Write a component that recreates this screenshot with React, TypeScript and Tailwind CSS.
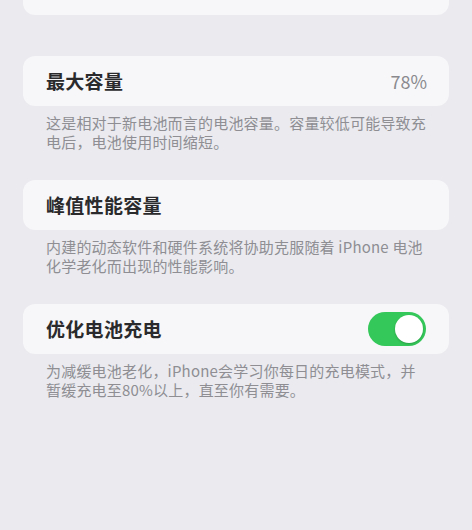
export default function App() {
  return (
    <div
      className="w-[472px] h-[530px] bg-[#eaeaef] overflow-hidden"
      style={{ fontFamily: '"Noto Sans CJK SC", "Noto Sans", sans-serif' }}
    >
      <div className="px-[23px]">
        {/* tail of the card above */}
        <div className="h-[15px] rounded-b-[12px] bg-[#f7f7f9]" />

        <div className="mt-[41px]">
          <Row title="最大容量" value="78%" />
          <Note>
            这是相对于新电池而言的电池容量。容量较低可能导致充
            <br />
            电后，电池使用时间缩短。
          </Note>
        </div>

        <div className="mt-[29px]">
          <Row title="峰值性能容量" />
          <Note>
            内建的动态软件和硬件系统将协助克服随着 iPhone 电池
            <br />
            化学老化而出现的性能影响。
          </Note>
        </div>

        <div className="mt-[29px]">
          <Row title="优化电池充电" toggle />
          <Note>
            为减缓电池老化，iPhone会学习你每日的充电模式，并
            <br />
            暂缓充电至80%以上，直至你有需要。
          </Note>
        </div>
      </div>
    </div>
  )
}

function Row({ title, value, toggle }: { title: string; value?: string; toggle?: boolean }) {
  return (
    <div className="h-[50px] rounded-[12px] bg-[#f7f7f9] flex items-center justify-between pl-[23px] pr-[22px]">
      <span className="text-[19px] font-semibold text-[#2a2a2c] tracking-[0.3px]">{title}</span>
      {value && <span className="text-[18px] text-[#8a8a8e]">{value}</span>}
      {toggle && <Switch />}
    </div>
  )
}

function Switch() {
  return (
    <div className="w-[58px] h-[34px] rounded-full bg-[#34c759] flex items-center justify-end p-[3px] mr-[1px]">
      <div className="w-[28px] h-[28px] rounded-full bg-white shadow-[0_1px_2px_rgba(0,0,0,0.2)]" />
    </div>
  )
}

function Note({ children }: { children: React.ReactNode }) {
  return (
    <p className="pt-[7px] pl-[23px] text-[15px] leading-[19px] text-[#8e8e93] tracking-[0.2px]">{children}</p>
  )
}
